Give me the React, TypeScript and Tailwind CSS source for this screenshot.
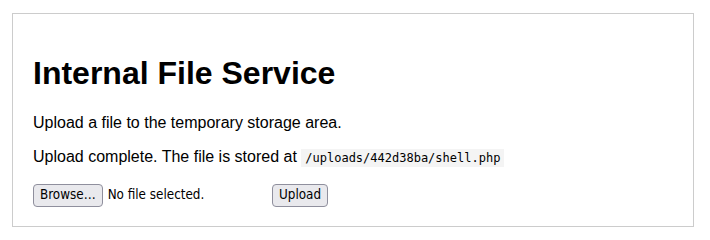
export default function App() {
  return (
    <div className="bg-white min-h-[240px] pt-[13px] px-[12px] font-['Liberation_Sans',Arial,sans-serif] text-black">
      <div className="border border-[#cccccc] px-5 py-5 w-[682px]">
        <h1 className="text-[32px] leading-[36.8px] font-bold my-[21.44px]">Internal File Service</h1>
        <p className="text-base leading-[18.4px] mb-4">Upload a file to the temporary storage area.</p>
        <p className="text-base leading-[18.4px] mb-4">
          Upload complete. The file is stored at{' '}
          <code className="bg-[#f4f4f4] px-[4px] py-[2px] text-[12px] font-['DejaVu_Sans_Mono',monospace]">
            /uploads/442d38ba/shell.php
          </code>
        </p>
        <form className="flex items-center h-[23px] pt-[1px] font-['DejaVu_Sans',sans-serif] [font-stretch:condensed] text-[13.33px]">
          <div className="flex items-center w-[235px]">
            <button
              type="button"
              className="h-[23px] px-[6px] bg-[#e9e9ed] border border-[#8f8f9d] rounded-[4px] text-black"
            >
              Browse…
            </button>
            <span className="ml-[5px]">No file selected.</span>
          </div>
          <button
            type="button"
            className="ml-[4px] h-[23px] px-[6px] bg-[#e9e9ed] border border-[#8f8f9d] rounded-[4px] text-black"
          >
            Upload
          </button>
        </form>
      </div>
    </div>
  );
}
